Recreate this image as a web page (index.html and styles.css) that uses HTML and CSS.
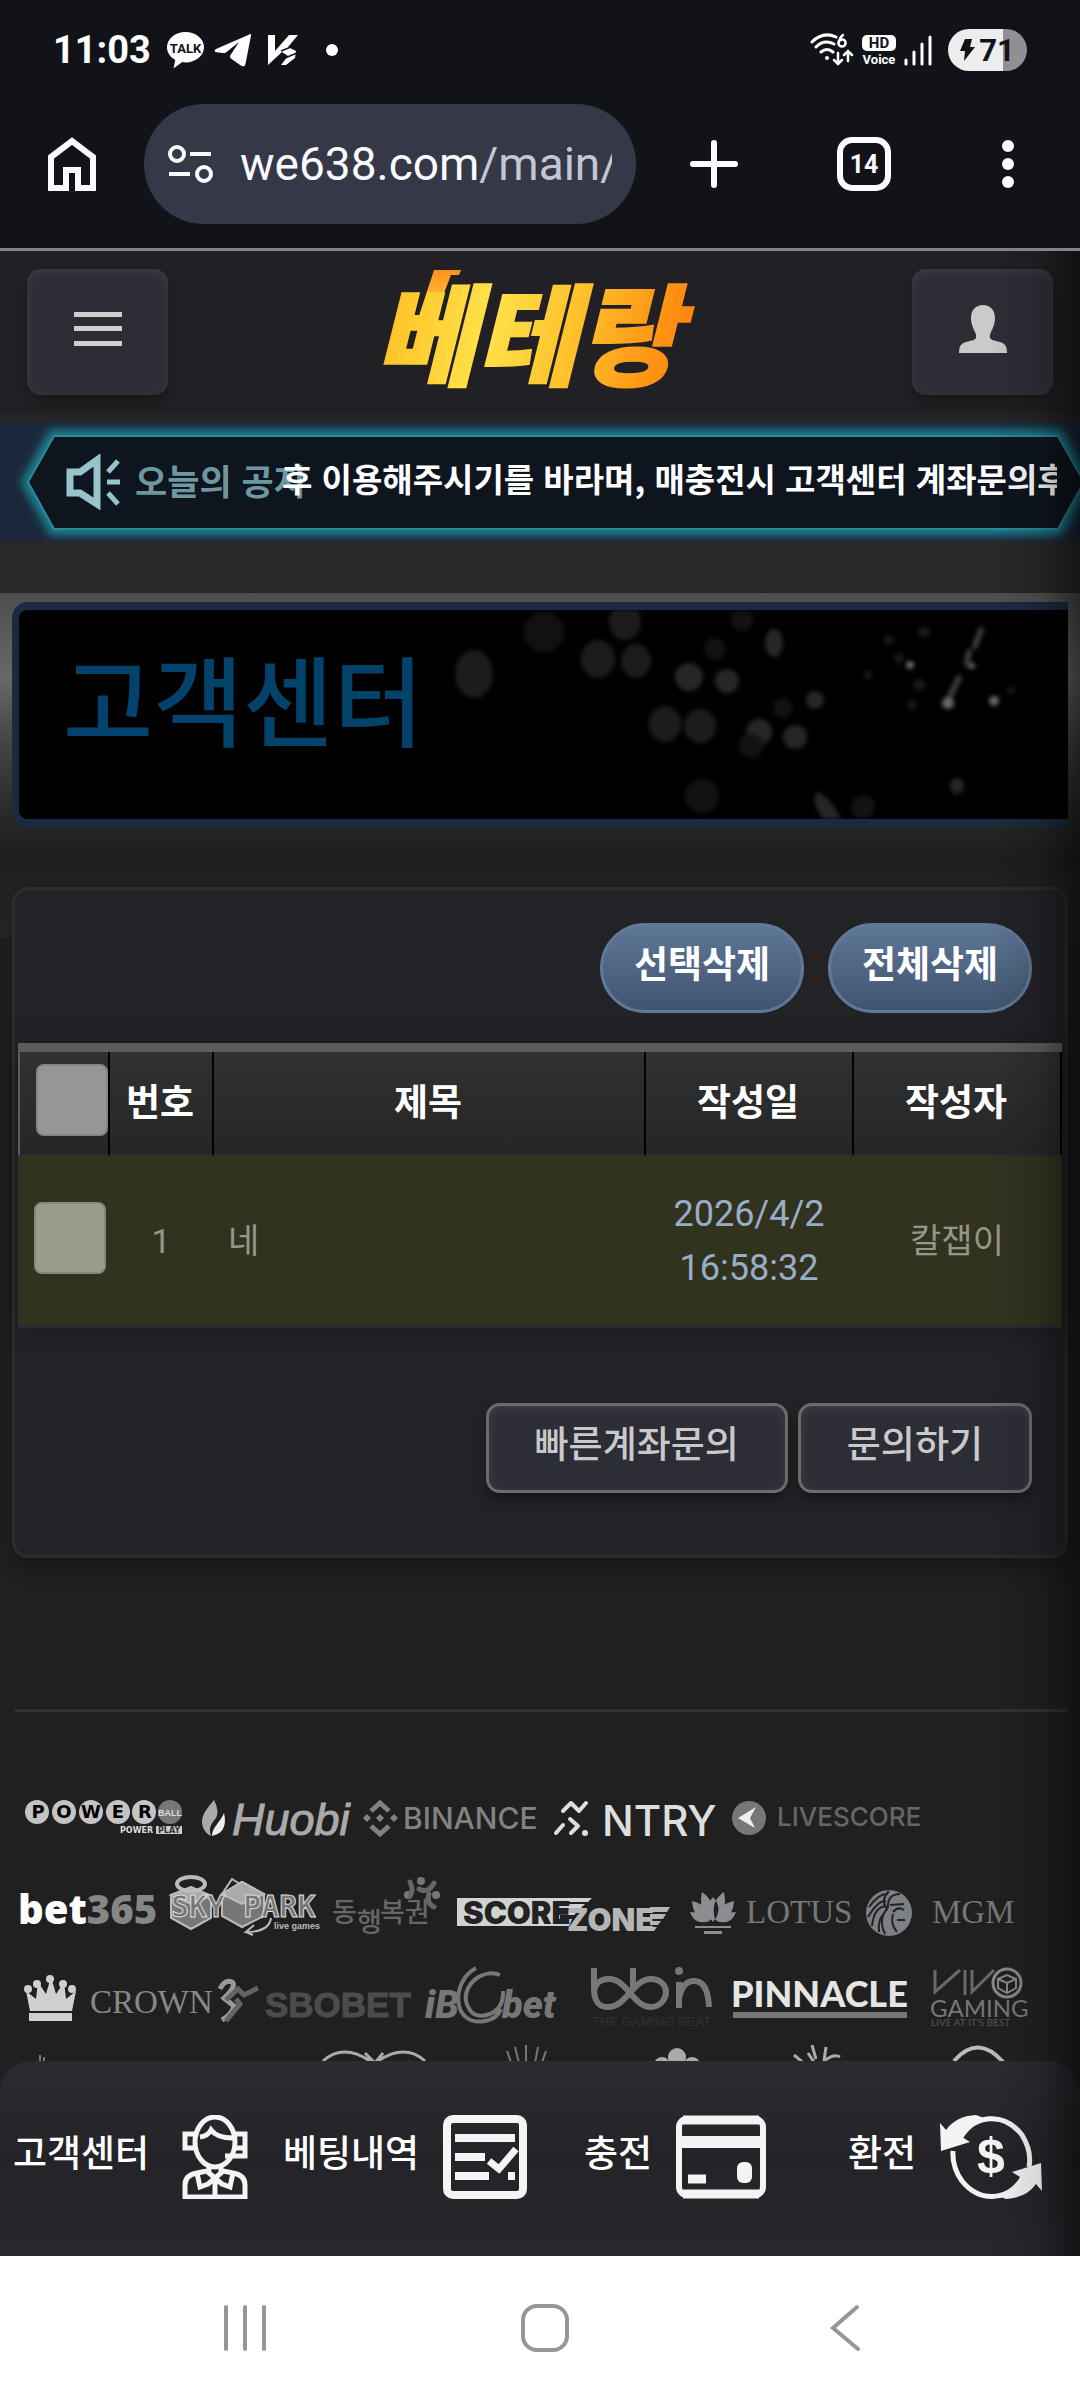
FILE: index.html
```html
<!DOCTYPE html>
<html lang="ko">
<head>
<meta charset="utf-8">
<meta name="viewport" content="width=device-width, initial-scale=1">
<title>고객센터</title>
<link rel="stylesheet" href="styles.css">
</head>
<body>

<div class="status-bar">
  <div class="status-left">
    <time class="clock">11:03</time>
    <svg width="37" height="37" viewBox="0 0 37 37"><path fill="#fff" d="M18.500 0C8.300 0 0 6.800 0 15.200c0 5.400 3.300 10 8.300 12.700L6.500 36.500l8.700-6.400c1.100.2 2.200.3 3.300.3C28.700 30.400 37 23.600 37 15.200S28.700 0 18.500 0z"/><text class="talk" x="18.500" y="21" text-anchor="middle">TALK</text></svg>
    <svg width="38" height="34" viewBox="0 0 38 34"><path fill="#fff" d="M36.500 1 2 16c-2 1-1.500 3 .5 3.300L9 20c2 .2 3-.4 4.500-1.800L25 9 16.500 22c-1 1.600-.4 2.800.8 3.800l9.500 6.600c2.200 1.500 4.300 1 4.700-1.700L37 2.500c.2-1.200.2-1.800-.5-1.500z"/></svg>
    <svg class="vs-icon" width="30" height="32" viewBox="0 0 30 32"><path fill="#fff" d="M0 1h7v16L21 1h9L20 13l8 4-1 7-9 7h-5l7-9-6-4L0 31z"/><path stroke="#121318" stroke-width="1.500" d="m13 17 15-6M17 24l12-5"/></svg>
    <span class="more-dot"></span>
  </div>
  <div class="status-right">
    <svg width="44" height="34" viewBox="0 0 44 34" fill="none" stroke="#fff" stroke-width="3" stroke-linecap="round"><path d="M2 9Q13-2 26 4M6 14q8-8 18-3M11 19q6-5 12 0"/><circle cx="17" cy="25" r="1" fill="#fff" stroke-width="2"/><circle cx="32" cy="10" r="3.600" stroke-width="2.500"/><path stroke-width="2.500" d="M29 9q1-5 4-7M28 20v11m-4-4 4 4 4-4M38 28V18m-4 4 4-4 4 4"/></svg>
    <svg class="loose" width="34" height="30" viewBox="0 0 34 30"><rect width="34" height="16" rx="5" fill="#fff"/><text class="hd" x="17" y="13" text-anchor="middle">HD</text><text class="voice" x="17" y="29" text-anchor="middle">Voice</text></svg>
    <svg width="28" height="31" viewBox="0 0 28 31" stroke="#fff" stroke-width="3" stroke-linecap="round"><path d="M2 25v4M10 17v12M18 9v20"/><path d="M26 2v27"/></svg>
    <div class="battery"><svg width="15" height="22" viewBox="0 0 15 22"><path fill="#121318" d="M5 0h7l-2 8h5L4 22l1-10H0z"/></svg>71</div>
  </div>
</div>

<div class="browser-bar">
  <button class="bare" aria-label="홈"><svg width="48" height="54" viewBox="0 0 48 54" fill="none" stroke="#fcf9ff" stroke-width="6"><path d="M3 20 24 4l21 16v31H30V33H18v18H3z"/></svg></button>
  <button class="address">
    <svg width="46" height="38" viewBox="0 0 46 38" fill="none" stroke="#fcf9ff" stroke-width="4"><circle cx="9" cy="9" r="7"/><path d="M22 9h21M1 29h21"/><circle cx="36" cy="29" r="7"/></svg>
    <span class="url">we638.com<span class="path">/main/</span></span>
  </button>
  <button class="bare" aria-label="새 탭"><svg width="48" height="48" viewBox="0 0 48 48" stroke="#fcf9ff" stroke-width="6" stroke-linecap="round"><path d="M24 3v42M3 24h42"/></svg></button>
  <button class="bare tabs">14</button>
  <button class="bare" aria-label="메뉴"><svg width="12" height="48" viewBox="0 0 12 48" fill="#fcf9ff"><circle cx="6" cy="6" r="6"/><circle cx="6" cy="24" r="6"/><circle cx="6" cy="42" r="6"/></svg></button>
</div>

<div class="viewport">
<main class="page">
  <header class="site-header">
    <button class="tile" aria-label="전체 메뉴"><svg width="48" height="36" viewBox="0 0 48 36" fill="#cfcfcf"><path d="M0 1h48v5H0zM0 15h48v5H0zM0 30h48v5H0z"/></svg></button>
    <a class="brand" href="#">
      <svg class="loose" width="320" height="126" viewBox="0 0 320 126">
        <defs><linearGradient id="gold" gradientUnits="userSpaceOnUse" x1="20" y1="40" x2="310" y2="100"><stop offset="0" stop-color="#ffc629"/><stop offset=".3" stop-color="#ffe14a"/><stop offset=".6" stop-color="#ffc02a"/><stop offset="1" stop-color="#ff7f0a"/></linearGradient>
        <linearGradient id="spike" x1="0" y1="0" x2="0" y2="1"><stop offset="0" stop-color="#ff8f1f"/><stop offset="1" stop-color="#ffe14a"/></linearGradient></defs>
        <path fill="url(#spike)" d="M54 1h27l-2 5h-8L54 50H38z"/>
        <text class="brand-text" x="-5" y="108">베테랑</text>
      </svg>
    </a>
    <button class="tile" aria-label="내 정보"><svg width="48" height="48" viewBox="0 0 48 48" fill="#cacaca"><path d="M24 0c-7 0-12 5-12 13 0 6 2.500 11 4 14 1 2 1.500 4 1 6-1 2-4 2.500-8 3.500-6 1.500-9 3-9 11.500h48c0-8.500-3-10-9-11.500-4-1-7-1.500-8-3.500-.5-2 0-4 1-6 1.500-3 4-8 4-14 0-8-5-13-12-13z"/></svg></button>
  </header>

  <div class="notice">
    <svg class="notice-frame" viewBox="0 0 1080 119" preserveAspectRatio="none">
      <g class="glow"><path d="M54 14h1004l26 46-26 47H54L28 60z" fill="none" stroke="#1b8795" stroke-width="12"/></g>
      <path d="M54 14h1004l26 46-26 47H54L28 60z" fill="#0e151f" stroke="#2a8b9b" stroke-width="2"/>
    </svg>
    <svg class="speaker" width="54" height="56" viewBox="0 0 54 56" fill="none" stroke="#96c4cc" stroke-width="7"><path d="M4 18h10L31 6v44L14 39H4z"/><path stroke-width="5" d="M41 28h13M42 18l10-11M42 39l10 11"/></svg>
    <strong class="notice-title">오늘의 공지</strong>
    <p class="marquee">후 이용해주시기를 바라며, 매충전시 고객센터 계좌문의후</p>
  </div>

  <section class="content">
    <div class="banner">
      <svg class="bokeh" viewBox="0 0 1049 209" preserveAspectRatio="xMaxYMid slice">
        <g fill="#1c1c1c"><ellipse cx="455" cy="64" rx="19" ry="24"/><ellipse cx="579" cy="49" rx="17" ry="19"/><ellipse cx="617" cy="51" rx="15" ry="17"/><ellipse cx="646" cy="114" rx="16" ry="18"/><ellipse cx="681" cy="116" rx="16" ry="17"/><ellipse cx="606" cy="12" rx="16" ry="18"/></g>
        <g fill="#262626"><circle cx="670" cy="67" r="14"/><circle cx="708" cy="71" r="12"/><circle cx="740" cy="122" r="13"/><circle cx="776" cy="127" r="12"/><circle cx="796" cy="90" r="9"/><ellipse cx="755" cy="33" rx="9" ry="14"/><path d="M797 182q14 4 25 27h-18q-12-16-7-27z"/><ellipse cx="938" cy="176" rx="7" ry="8"/></g>
        <g fill="#121212"><circle cx="525" cy="22" r="20"/><circle cx="696" cy="39" r="11"/><circle cx="723" cy="10" r="11"/><circle cx="683" cy="186" r="17"/><circle cx="844" cy="197" r="12"/><circle cx="764" cy="98" r="10"/><circle cx="732" cy="136" r="12"/></g>
        <path d="m962 20-6 16M950 42l-2 12M940 68l-10 20" stroke="#3c3c3c" stroke-width="6" stroke-linecap="round"/><g fill="#666"><circle cx="929" cy="93" r="6"/><circle cx="975" cy="91" r="5"/><circle cx="891" cy="55" r="4"/><circle cx="953" cy="56" r="3"/></g><g fill="#1d1716"><circle cx="880" cy="48" r="5"/><circle cx="900" cy="75" r="6"/><circle cx="870" cy="30" r="5"/><circle cx="905" cy="22" r="6"/><circle cx="893" cy="95" r="5"/><circle cx="849" cy="65" r="4"/><circle cx="992" cy="80" r="4"/></g>
      </svg>
      <h1>고객센터</h1>
    </div>

    <div class="panel">
      <div class="actions pills">
        <button class="pill">선택삭제</button>
        <button class="pill">전체삭제</button>
      </div>
      <table class="inbox">
        <colgroup><col class="c-check"><col class="c-no"><col><col class="c-date"><col class="c-date"></colgroup>
        <thead><tr><th><input type="checkbox" aria-label="전체 선택"></th><th>번호</th><th>제목</th><th>작성일</th><th>작성자</th></tr></thead>
        <tbody><tr><td><input type="checkbox" aria-label="1번 선택"></td><td>1</td><td class="subject">네</td><td class="date">2026/4/2<br>16:58:32</td><td>칼잽이</td></tr></tbody>
      </table>
      <div class="actions">
        <button class="plain">빠른계좌문의</button>
        <button class="plain">문의하기</button>
      </div>
    </div>
  </section>

  <footer class="partners">
    <div class="row">
      <svg width="174" height="60">
        <g fill="#c4c4c4"><circle cx="17" cy="24" r="12"/><circle cx="44" cy="24" r="12"/><circle cx="71" cy="24" r="12"/><circle cx="98" cy="24" r="12"/><circle cx="124" cy="24" r="12"/></g><circle cx="150" cy="24" r="12" fill="#777"/>
        <g class="ball" text-anchor="middle"><text x="18" y="30">P</text><text x="44" y="30">O</text><text x="71" y="30">W</text><text x="98" y="30">E</text><text x="125" y="30">R</text></g>
        <text class="ball-sm" x="150" y="28" text-anchor="middle">BALL</text>
        <rect x="136" y="38" width="26" height="8" fill="#ccc"/><text class="play" x="100" y="45">POWER</text><text class="play dark" x="138" y="45">PLAY</text>
      </svg>
      <svg width="150" height="60"><path fill="#aaa" d="M12 12c-6 7-12 14-12 22 0 6 4 12 9 14-3-9 1-13 5-18 3-5 1-12-2-18z"/><path fill="#eee" d="M22 25c2 9 2 20-12 23 0-9 8-13 12-23z"/><text class="huobi" x="30" y="47">Huobi</text></svg>
      <svg width="185" height="60"><g fill="none" stroke="#828282" stroke-width="5"><path d="m11 23 9-8 9 8M11 38l9 8 9-8"/></g><path fill="#828282" d="m20 26 4 4-4 4-4-4zM7 26l4 4-4 4-4-4zM34 26l4 4-4 4-4-4z"/><text class="binance" x="43" y="41">BINANCE</text></svg>
      <svg width="171" height="60"><path d="m10 23 8-8 8 8 7-8M3 45l7-8M17 31l8 7-7 7" fill="none" stroke="#dedede" stroke-width="4" stroke-linecap="round" stroke-linejoin="round"/><circle cx="32" cy="45" r="3" fill="#dedede"/><text class="ntry" x="49" y="48">NTRY</text></svg>
      <svg width="200" height="60"><circle cx="17" cy="30" r="17" fill="#777"/><path fill="#eee" d="m6 30 18-11-6 11 5 10z"/><text class="livescore" x="45" y="38">LIVESCORE</text></svg>
    </div>
    <div class="row">
      <svg width="138" height="60"><text class="bet" x="-2" y="48">bet<tspan fill="#868686">365</tspan></text></svg>
      <svg width="148" height="60"><g fill="#777" stroke="#bbb" stroke-width="2"><path d="m1 19 20-8 20 9v22L21 53 1 42zM52 18l20-12 22 12v22L72 51 52 40z"/><path fill="#aaa" d="m1 19 20 9 20-8-20-9zM52 18l20 10 22-10L72 6z"/><path fill="none" d="M52 18 62 3l8 5"/><ellipse cx="21" cy="8" rx="14" ry="7" fill="none" stroke-width="4"/><path fill="none" d="M101 42q-2 14-25 14l8-7m-8 7 7 3"/></g><text class="sky" x="1" y="41">SKY PARK</text><text class="sky-sm" x="104" y="53">live games</text></svg>
      <svg width="112" height="60"><text class="lotto" x="2" y="46">동</text><text class="lotto" x="27" y="56">행</text><text class="lotto" x="50" y="46">복권</text><g fill="#777"><circle cx="91" cy="5" r="4"/><circle cx="78" cy="19" r="4"/><circle cx="106" cy="19" r="4"/></g><path d="M80 6q4 8 0 14M89 13q9 5 15-6M104 31q-8-4-5-13" fill="none" stroke="#666" stroke-width="5" stroke-linecap="round"/></svg>
      <svg width="218" height="60"><path fill="#d2d2d2" d="M3 22h135l-4 4h-26v2h23l-4 4h-23v3h20l-4 4h-14v4h12l-3 7H3z"/><text class="score" x="9" y="48">SCORE</text><text class="zone" x="113" y="55">ZONE</text><path fill="#b5b5b5" d="M196 31h20l-3 5h-17zM196 38h16l-3 5h-13zM196 45h11l-3 4h-8zM196 51h7l-3 4h-4z"/></svg>
      <svg width="170" height="60"><g fill="#8b8d90"><path d="M29 21q11 12 0 25-11-13 0-25zM18 16q14 9 9 28-13-7-9-28zM40 16q-14 9-9 28 13-7 9-28zM8 25q15 3 18 19Q9 44 8 25zM50 25q-15 3-18 19 17 0 18-19zM6 36q12 0 20 9-15 5-20-9zM52 36q-12 0-20 9 15 5 20-9z"/><path d="M11 50h36v2H11zM20 55h18v3H20z"/></g><text class="serif" x="62" y="47">LOTUS</text></svg>
      <svg width="160" height="60"><circle cx="23" cy="37" r="23" fill="#7c7f83"/><path d="M23 15q-9 9-2 18-9 10-2 25M34 18q-13 0-12 14M3 31q10-14 19-13M2 41q10-17 18-16M6 50q2-19 14-20M13 56q-1-14 5-18M24 29l14-1M38 34q-6-4-11 2M31 56q-7-8-4-18M31 44h8" fill="none" stroke="#222" stroke-width="2"/><text class="serif" x="66" y="47">MGM</text></svg>
    </div>
    <div class="row tight">
      <svg width="186" height="60"><g fill="#d0d0d0"><path d="m6 24 10 8 2-17 8 12 5-17 5 17 8-12 2 17 10-8-4 20H10zM9 46h43v8H9z"/><circle cx="8" cy="22" r="4"/><circle cx="17" cy="17" r="4"/><circle cx="30" cy="12" r="4"/><circle cx="43" cy="17" r="4"/><circle cx="52" cy="22" r="4"/></g><text class="serif crown" x="70" y="46">CROWN</text></svg>
      <svg width="198" height="60"><path d="M6 22q5-10 12-7 5 4-8 16l10 8q-2 8-12 14" fill="none" stroke="#999" stroke-width="5"/><path d="m12 33 12-11 6 6 14-7M22 32l4 5L12 54" fill="none" stroke="#646464" stroke-width="5"/><text class="sbobet" x="51" y="50">SBOBET</text></svg>
      <svg width="150" height="60"><text class="ibc" x="5" y="51">iB</text><text class="ibc" x="82" y="51">bet</text><path d="M56 1C30 15 32 60 65 54q12-2 16-12M80 8C62 1 43 18 46 34q5 20 24 13 14-6 13-23" fill="none" stroke="#777" stroke-width="4"/></svg>
      <svg width="140" height="60"><path d="M16 1v20q0 20 15 19c18-1 24-28 42-28 10 0 15 7 15 13 0 8-7 15-15 15-18 0-24-28-42-28-10 0-15 6-15 13M55 1v20M101 41V15M101 31q4-18 16-17 13 1 14 26" fill="none" stroke="#777" stroke-width="6"/><circle cx="101" cy="4" r="4" fill="#777"/><text class="beat" x="14" y="59">THE GAMING BEAT</text></svg>
      <svg width="186" height="60"><text class="pinnacle" x="5" y="40">PINNACLE</text><path fill="#777" d="M7 45h174v6H7z"/></svg>
      <svg width="112" height="60"><path d="M15 3v22L40 3M45 3v25M52 3v22L74 3" fill="none" stroke="#696969" stroke-width="3"/><circle cx="87" cy="16" r="14" fill="none" stroke="#888" stroke-width="3"/><path d="m78 12 9-4 9 4v9l-9 5-9-5zM78 12l9 4 9-4M87 16v10" fill="none" stroke="#888" stroke-width="2"/><text class="vivo" x="10" y="50">GAMING</text><text class="vivo-sm" x="11" y="59">LIVE AT IT'S BEST</text></svg>
    </div>
    <svg class="cut" width="1040" height="60" fill="none" stroke="#777" stroke-width="2"><path d="M20 10v8M24 12v8M487 6l5 14M495 2l4 16M506 0v18M518 2l-3 16M526 6l-5 14"/><path stroke="#aaa" stroke-width="3" d="M303 16q20-18 47 0M405 16q-20-18-47 0M345 8l10 10M363 8l-8 10"/><path stroke="#aaa" stroke-width="3" d="m774 10 12 10M788 8l8 12M792 0l4 14M806 2l-2 14q10-8 16-4"/><path stroke="#bbb" stroke-width="4" d="M934 16Q958-12 984 18"/><g fill="#aaa" stroke="none"><circle cx="657" cy="12" r="9"/><circle cx="642" cy="20" r="8"/><circle cx="672" cy="20" r="8"/></g></svg>
  </footer>
</main>

<nav class="dock">
  <a href="#">고객센터<svg width="84" height="84" viewBox="0 0 84 84" fill="none" stroke="#f4f4f4" stroke-width="5"><ellipse cx="42" cy="27" rx="20" ry="25"/><path d="M27 22q8-1 11-7 6 8 22 8M23 19H12v14h11M61 19h11v14H62M72 33v8H52M36 50v8l6 5 6-5v-8M12 84V70q0-10 12-12l10-2M72 84V70q0-10-12-12l-10-2M24 58l3 14 8-3 7-6 7 6 8 3 3-14M42 63v21M12 82h60"/></svg></a>
  <a href="#">베팅내역<svg width="84" height="84" viewBox="0 0 84 84" fill="none" stroke="#f4f4f4" stroke-width="8"><rect x="4" y="4" width="76" height="76" rx="6"/><path d="M12 23h60M12 42h30M12 61h34M65 61h7"/><path stroke-width="7" d="m46 46 10 8 17-20"/></svg></a>
  <a href="#">충전<svg width="90" height="84" viewBox="0 0 90 84" fill="none" stroke="#f4f4f4" stroke-width="6"><rect x="3" y="4" width="84" height="76" rx="8"/><path stroke-width="9" d="M7 5h76M7 79h76"/><path stroke-width="12" d="M4 27h82"/><path stroke-width="9" d="M12 64h18"/><rect x="61" y="47" width="15" height="21" rx="6" fill="#f4f4f4" stroke="none"/></svg></a>
  <a href="#">환전<svg width="102" height="84" viewBox="0 0 102 84" fill="none" stroke="#f4f4f4" stroke-width="5"><path d="M21 22C34 0 64-4 82 20q10 16 7 32M82 64C66 88 38 86 22 66Q12 52 13 36"/><path fill="#f4f4f4" stroke="none" d="M0 8 6 15Q16 1 36 0l8 3q-16 4-22 19l8 5-29 9zM102 76l-6-7q-10 14-30 15l-8-3q16-4 22-19l-8-5 29-9z"/><text class="dollar" x="51" y="58" text-anchor="middle">$</text></svg></a>
</nav>
<div class="edge-shade"></div>
</div>

<div class="system-nav">
  <button class="bare" aria-label="최근 앱"><svg width="44" height="48" viewBox="0 0 44 48" stroke="#969696" stroke-width="4" stroke-linecap="round"><path d="M3 3v42M22 3v42M41 3v42"/></svg></button>
  <button class="bare" aria-label="홈 화면"><svg width="48" height="48" viewBox="0 0 48 48"><rect x="2" y="2" width="44" height="44" rx="14" fill="none" stroke="#969696" stroke-width="4"/></svg></button>
  <button class="bare" aria-label="뒤로"><svg width="30" height="48" viewBox="0 0 30 48" fill="none" stroke="#969696" stroke-width="4" stroke-linecap="round"><path d="M27 3 3 24l25 21"/></svg></button>
</div>
</body>
</html>
```
FILE: styles.css
```css
* { box-sizing: border-box; }

body {
  margin: 0;
  height: 100vh;
  display: flex;
  flex-direction: column;
  background: #121318;
  color: #fff;
  font-family: Roboto, "Noto Sans CJK KR", sans-serif;
  font-size: 36px;
}

svg { display: block; flex: none; }
.loose { overflow: visible; }
button, input { font: inherit; color: inherit; margin: 0; }
button { cursor: pointer; }
h1, p { margin: 0; }

.bare {
  display: flex;
  align-items: center;
  justify-content: center;
  padding: 0;
  border: 0;
  background: none;
}

/* status bar */
.status-bar {
  flex: none;
  height: 100px;
  padding: 0 53px;
  display: flex;
  align-items: center;
  justify-content: space-between;
}
.status-left, .status-right { display: flex; align-items: center; }
.status-left { gap: 10px; }
.status-right { gap: 8px; }
.clock { font-size: 38px; font-weight: 700; margin-right: 6px; }
.vs-icon { margin-left: 6px; }
.more-dot { width: 12px; height: 12px; border-radius: 50%; background: #fff; margin-left: 18px; }
.talk { font: 700 13px Roboto, sans-serif; fill: #121318; }
.hd { font: 700 15px Roboto, sans-serif; fill: #121318; }
.voice { font: 700 13px Roboto, sans-serif; fill: #fff; }
.battery {
  width: 79px;
  height: 42px;
  margin-left: 8px;
  border-radius: 21px;
  display: flex;
  align-items: center;
  justify-content: center;
  gap: 4px;
  background: linear-gradient(90deg, #ededed 70%, #909092 70%);
  color: #121318;
  font-size: 31px;
  font-weight: 700;
}

/* browser toolbar */
.browser-bar {
  flex: none;
  height: 151px;
  padding: 4px 66px 24px 48px;
  border-bottom: 3px solid #82838c;
  display: flex;
  align-items: center;
}
.address {
  flex: 1;
  min-width: 0;
  height: 120px;
  margin: 0 54px 0 48px;
  padding: 0 24px;
  border: 0;
  border-radius: 60px;
  background: #353847;
  color: #fcf9ff;
  display: flex;
  align-items: center;
  gap: 26px;
}
.url { flex: 1; overflow: hidden; white-space: nowrap; text-align: left; font-size: 46px; line-height: 64px; }
.url .path { color: #c5c6d3; }
.tabs {
  width: 54px;
  height: 54px;
  margin: 0 111px 0 99px;
  border: 6px solid #fcf9ff;
  border-radius: 15px;
  color: #fcf9ff;
  font-size: 25px;
  font-weight: 700;
}

/* web page */
.viewport {
  position: relative;
  flex: 1;
  min-height: 0;
  display: flex;
  flex-direction: column;
  background: #202020;
}
.page { flex: 1; min-height: 0; overflow: hidden; }
.edge-shade {
  position: absolute;
  inset: 0 0 0 auto;
  width: 90px;
  background: linear-gradient(90deg, transparent, rgba(0, 0, 0, .12) 55%, rgba(0, 0, 0, .5));
  pointer-events: none;
}

.site-header {
  height: 171px;
  padding: 18px 27px;
  display: flex;
  justify-content: space-between;
  background: linear-gradient(#212024 162px, #252525 162px);
}
.tile {
  width: 141px;
  height: 126px;
  border: 0;
  border-radius: 14px;
  display: flex;
  align-items: center;
  justify-content: center;
  padding: 0 0 6px;
  background: #2d2d36;
  box-shadow: inset 0 3px 12px rgba(255, 255, 255, .07), 0 8px 14px rgba(0, 0, 0, .25);
}
.brand-text {
  font: italic 900 110px "Noto Sans CJK KR", sans-serif;
  fill: url(#gold);
  stroke: url(#gold);
  stroke-width: 2px;
}

.notice {
  position: relative;
  height: 119px;
  padding: 0 23px 0 66px;
  display: flex;
  align-items: center;
  background: #1b283c;
  overflow: hidden;
}
.notice-frame { position: absolute; inset: 0; width: 100%; height: 100%; }
.glow { filter: blur(5px); }
.speaker, .notice-title, .marquee { position: relative; }
.notice-title {
  width: 147px;
  margin-left: 15px;
  padding-bottom: 4px;
  white-space: nowrap;
  font: 700 35px/48px "Noto Sans CJK KR", sans-serif;
  color: #6f979f;
}
.marquee {
  flex: 1;
  overflow: hidden;
  white-space: nowrap;
  font: 700 33px/48px "Noto Sans CJK KR", sans-serif;
  padding-bottom: 8px;
}

.content {
  margin-top: 52px;
  padding: 9px 12px 0;
  background: linear-gradient(#4e4e4e, #686868 85px, #444 150px, #262626 230px, #1e1e1e 265px, #272727 345px) 0 0 / 100% 345px no-repeat;
  box-shadow: 0 -52px 0 #282828;
}
.banner {
  position: relative;
  height: 225px;
  border: solid #1b2a40;
  border-width: 8px 0 8px 7px;
  border-radius: 16px 0 0 16px;
  background: #000;
  overflow: hidden;
  display: flex;
}
.bokeh { position: absolute; inset: 0; width: 100%; height: 100%; filter: blur(2px); }
.banner h1 {
  position: relative;
  padding: 16px 44px;
  font: 500 98px/140px "Noto Sans CJK KR", sans-serif;
  color: #03436b;
}

.panel {
  margin-top: 60px;
  padding: 33px 3px 62px;
  border: 3px solid #2b2b33;
  border-radius: 16px;
  background: #232227;
  box-shadow: 0 10px 20px rgba(0, 0, 0, .3);
}
.actions {
  display: flex;
  justify-content: flex-end;
  gap: 10px;
  padding-right: 30px;
  font-family: "Noto Sans CJK KR", sans-serif;
}
.pills { gap: 24px; margin-bottom: 30px; }
.pill, .plain { height: 90px; border: 3px solid #607996; font-size: 37px; line-height: 48px; }
.pill {
  width: 204px;
  padding: 0 0 12px;
  border-radius: 45px;
  background: linear-gradient(#5e7796, #40546f);
  font-weight: 700;
}
.plain {
  padding: 0 46px 12px;
  border-color: #6b6b6b;
  border-radius: 14px;
  background: #2d2d36;
  color: #c9c9c9;
  font-weight: 500;
  box-shadow: inset 0 3px 12px rgba(255, 255, 255, .08), 0 8px 12px rgba(0, 0, 0, .35);
}

.inbox {
  width: 100%;
  margin-bottom: 75px;
  table-layout: fixed;
  border-spacing: 0;
  border-top: 9px solid #5c5c5b;
  box-shadow: 0 0 24px rgba(0, 0, 0, .25);
}
.c-check { width: 92px; }
.c-no { width: 104px; }
.c-date { width: 208px; }
.inbox th, .inbox td { padding: 0 2px 0 0; text-align: center; }
.inbox th {
  height: 104px;
  padding-bottom: 6px;
  border-right: 2px solid #000;
  border-bottom: 2px solid #2b2b33;
  background: linear-gradient(#313131, #262626);
  font: 700 37px/48px "Noto Sans CJK KR", sans-serif;
}
.inbox th:first-child { border-left: 2px solid #5c5c5b; }
.inbox td {
  height: 172px;
  border-bottom: 3px solid #2b2b33;
  background: #32331f;
  color: #96978b;
  font-size: 34px;
  line-height: 54px;
}
.inbox .subject { padding-left: 14px; text-align: left; }
.inbox .date { color: #98adc8; font-size: 36px; }
.inbox input {
  appearance: none;
  display: block;
  width: 72px;
  height: 72px;
  margin-left: 16px;
  border: 2px solid #868683;
  border-radius: 8px;
  background: #969696;
}
.inbox td input { margin-bottom: 6px; background: #999b8c; }

.partners {
  margin: 151px 12px 0 15px;
  padding: 76px 0 0 5px;
  border-top: 3px solid #333;
}
.row { display: flex; gap: 8px; }
.row + .row { margin-top: 28px; gap: 12px; }
.row + .row.tight { margin-top: 31px; gap: 8px; }
.row svg { overflow: visible; }
.cut { margin-top: 18px; }
.ball { font: 700 18px "DejaVu Sans", sans-serif; }
.ball-sm { font: 700 9px "Liberation Sans", sans-serif; fill: #ddd; }
.play { font: 700 8px "DejaVu Sans", sans-serif; fill: #ddd; }
.play.dark { fill: #333; }
.huobi { font: italic 400 45px "Liberation Sans", sans-serif; fill: #aaa; stroke: #aaa; stroke-width: 1px; }
.binance { font: 500 30px Inter, sans-serif; fill: #828282; }
.ntry { font: 500 42px Inter, sans-serif; fill: #dedede; }
.livescore { font: 500 26px Inter, sans-serif; fill: #666; }
.bet { font: 800 40px "Open Sans", sans-serif; fill: #fff; }
.sky { font: 700 30px "DejaVu Sans Mono", monospace; fill: #777; stroke: #ddd; stroke-width: 1px; }
.sky-sm { font: 700 9px "Liberation Sans", sans-serif; fill: #bbb; }
.lotto { font: 500 27px "Noto Sans CJK KR", sans-serif; fill: #666; }
.score { font: 900 31px Inter, sans-serif; fill: #222; }
.zone { font: 900 31px Inter, sans-serif; fill: #b5b5b5; }
.serif { font: 400 33px "Liberation Serif", serif; fill: #777; }
.serif.crown { fill: #888; }
.sbobet { font: 700 35px "Liberation Sans", sans-serif; fill: #4c4c4c; stroke: #4c4c4c; stroke-width: 1px; }
.ibc { font: italic 900 38px Roboto, sans-serif; fill: #777; }
.beat { font: 400 13px "Liberation Sans", sans-serif; fill: #303030; }
.pinnacle { font: 900 36px Lato, sans-serif; fill: #e5e5e5; }
.vivo { font: 400 24px Lato, sans-serif; fill: #777; }
.vivo-sm { font: 400 10px Lato, sans-serif; fill: #555; }

/* bottom menu */
.dock {
  flex: none;
  height: 195px;
  padding-top: 54px;
  display: grid;
  grid-template-columns: repeat(4, 1fr);
  align-items: start;
  border-radius: 32px 32px 0 0;
  background: linear-gradient(#2b2b31, #242328 50%, #28272d);
}
.dock a {
  height: 84px;
  display: flex;
  justify-content: center;
  gap: 24px;
  color: #fff;
  text-decoration: none;
  white-space: nowrap;
  font: 500 37px/72px "Noto Sans CJK KR", sans-serif;
}
.dollar { font: 700 50px "Liberation Sans", sans-serif; fill: #f4f4f4; stroke: none; }

/* system navigation */
.system-nav {
  flex: none;
  height: 144px;
  padding-left: 10px;
  display: flex;
  justify-content: center;
  background: #fff;
}
.system-nav .bare { width: 28%; }
```
